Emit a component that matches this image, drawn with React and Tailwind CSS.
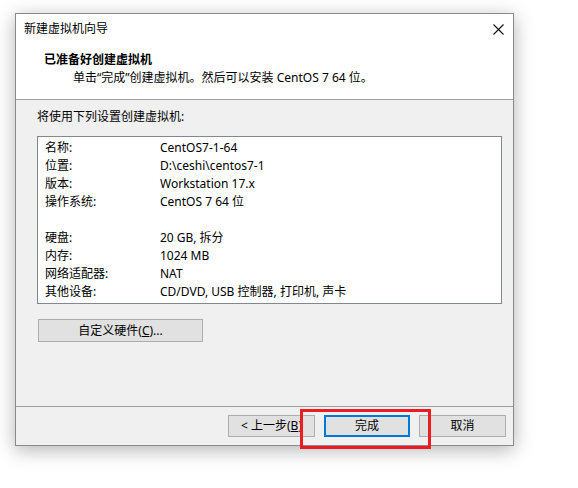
import React from 'react';

const rows = [
  ['名称:', 'CentOS7-1-64'],
  ['位置:', 'D:\\ceshi\\centos7-1'],
  ['版本:', 'Workstation 17.x'],
  ['操作系统:', 'CentOS 7 64 位'],
  ['', ''],
  ['硬盘:', '20 GB, 拆分'],
  ['内存:', '1024 MB'],
  ['网络适配器:', 'NAT'],
  ['其他设备:', 'CD/DVD, USB 控制器, 打印机, 声卡'],
];

const font = { fontFamily: '"Noto Sans", "Noto Sans CJK SC", sans-serif' };

const App = () => {
  return (
    <div className="relative w-[578px] h-[488px] bg-white overflow-hidden text-[12px] text-black" style={font}>
      {/* Window */}
      <div className="absolute left-[15px] top-[13px] w-[499px] h-[433px] border border-[#8a8a8a] bg-[#f0f0f0] shadow-[0_4px_18px_rgba(0,0,0,0.3)] flex flex-col">
        {/* Title + header */}
        <div className="bg-white border-b border-[#a0a0a0]">
          <div className="h-[30px] flex items-center justify-between pl-[8px] pr-[9px]">
            <span className="leading-[16px]">新建虚拟机向导</span>
            <svg width="11" height="11" viewBox="0 0 11 11">
              <path d="M0.5 0.5 L10.5 10.5 M10.5 0.5 L0.5 10.5" stroke="#111" strokeWidth="1.1" />
            </svg>
          </div>
          <div className="h-[55px] pl-[28px] pt-[7px]">
            <div className="font-bold leading-[18px]">已准备好创建虚拟机</div>
            <div className="pl-[29px] leading-[18px]">单击“完成”创建虚拟机。然后可以安装 CentOS 7 64 位。</div>
          </div>
        </div>

        {/* Body */}
        <div className="flex-1 pl-[21px] pt-[8px]">
          <div className="leading-[18px]">将使用下列设置创建虚拟机:</div>
          <div className="mt-[10px] w-[465px] h-[168px] border border-[#828790] bg-white pl-[7px] pt-[2px]">
            {rows.map(([k, v], i) => (
              <div key={i} className="flex h-[18px] items-center leading-[18px]">
                <span className="w-[115px] shrink-0">{k}</span>
                <span>{v}</span>
              </div>
            ))}
          </div>
          <button className="mt-[15px] ml-[1px] w-[165px] h-[23px] border border-[#adadad] bg-[#e1e1e1] flex items-center justify-center leading-[16px]">
            自定义硬件(<span className="underline">C</span>)...
          </button>
        </div>

        {/* Footer */}
        <div className="h-[39px] border-t border-[#a0a0a0] flex justify-end items-start gap-[9px] pr-[7px] pt-[8px]">
          <button className="w-[87px] h-[22px] border border-[#adadad] bg-[#e1e1e1] flex items-center justify-center leading-[16px]">
            &lt; 上一步(<span className="underline">B</span>)
          </button>
          <button className="w-[86px] h-[22px] border-2 border-[#0078d7] bg-[#e1e1e1] flex items-center justify-center leading-[16px]">
            完成
          </button>
          <button className="w-[87px] h-[22px] border border-[#adadad] bg-[#e1e1e1] flex items-center justify-center leading-[16px]">
            取消
          </button>
        </div>
      </div>

      {/* Red highlight */}
      <div className="absolute left-[300px] top-[409px] w-[131px] h-[40px] border-[3px] border-[#ed1c24]" />
    </div>
  );
};

export default App;
